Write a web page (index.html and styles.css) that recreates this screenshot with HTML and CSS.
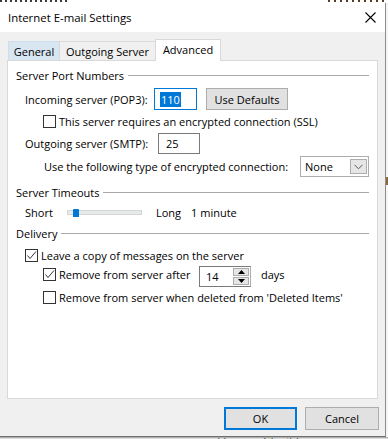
FILE: index.html
```html
<!DOCTYPE html>
<html>
<head>
<meta charset="utf-8">
<link rel="stylesheet" href="styles.css">
</head>
<body>
<div class="topstrip"><span class="bits bits-a"></span><span class="bits bits-b"></span></div>
<div class="stage">
  <div class="dlg">
    <div class="titlebar">
      <span class="title">Internet E-mail Settings</span>
      <svg class="close" width="11" height="11" viewBox="0 0 11 11"><path d="M0.5 0.5 L10.5 10.5 M10.5 0.5 L0.5 10.5" stroke="#000" stroke-width="1.1" fill="none"/></svg>
    </div>
    <div class="dlgbody">
      <div class="tabs">
        <div class="tab tab-general">General</div>
        <div class="tab tab-outgoing">Outgoing Server</div>
        <div class="tab tab-adv">Advanced</div>
      </div>
      <div class="panel">
        <div class="group"><span>Server Port Numbers</span><i class="line"></i></div>

        <div class="row r-in">
          <span class="lbl lbl-in">Incoming server (POP3):</span>
          <div class="field field-focus"><span class="sel">110</span></div>
          <div class="btn btn-def">Use Defaults</div>
        </div>

        <div class="row r-ssl">
          <span class="cb"></span><span class="cbtext">This server requires an encrypted connection (SSL)</span>
        </div>

        <div class="row r-out">
          <span class="lbl lbl-out">Outgoing server (SMTP):</span>
          <div class="field field-out">25</div>
        </div>

        <div class="row r-enc">
          <span>Use the following type of encrypted connection:</span>
          <div class="combo"><span>None</span><span class="drop"><svg width="9" height="6" viewBox="0 0 9 6"><path d="M0.5 0.8 L4.5 4.8 L8.5 0.8" stroke="#5a5a5a" stroke-width="1" fill="none"/></svg></span></div>
        </div>

        <div class="group g2"><span>Server Timeouts</span><i class="line"></i></div>

        <div class="row r-slider">
          <span class="lbl-short">Short</span>
          <div class="track"><span class="thumb"></span></div>
          <span class="long">Long</span>
          <span class="min">1 minute</span>
        </div>

        <div class="group g3"><span>Delivery</span><i class="line"></i></div>

        <div class="row r-leave">
          <span class="cb checked"><svg width="11" height="11" viewBox="0 0 11 11"><path d="M1.5 5.5 L4 8.5 L10 1.5" stroke="#333" stroke-width="1" fill="none"/></svg></span><span class="cbtext">Leave a copy of messages on the server</span>
        </div>

        <div class="row r-after">
          <span class="cb checked"><svg width="11" height="11" viewBox="0 0 11 11"><path d="M1.5 5.5 L4 8.5 L10 1.5" stroke="#333" stroke-width="1" fill="none"/></svg></span><span class="cbtext lbl-after">Remove from server after</span>
          <div class="spin">
            <span class="spinval">14</span>
            <span class="spinbtns">
              <span class="sb"><svg width="7" height="4" viewBox="0 0 7 4"><path d="M3.5 0 L7 4 L0 4 Z" fill="#000"/></svg></span>
              <span class="sb"><svg width="7" height="4" viewBox="0 0 7 4"><path d="M0 0 L7 0 L3.5 4 Z" fill="#000"/></svg></span>
            </span>
          </div>
          <span class="days">days</span>
        </div>

        <div class="row r-del">
          <span class="cb"></span><span class="cbtext">Remove from server when deleted from 'Deleted Items'</span>
        </div>
      </div>
      <div class="buttons">
        <div class="btn btn-ok">OK</div>
        <div class="btn btn-cancel">Cancel</div>
      </div>
    </div>
  </div>
  <div class="rightstrip"></div>
</div>
<div class="behind"><span class="behind-text">Usman Sheikh</span></div>
</body>
</html>
```
FILE: styles.css
```css
* { box-sizing: border-box; }
html, body { margin: 0; padding: 0; }
body {
  width: 388px;
  height: 439px;
  overflow: hidden;
  background: #e4e4e4;
  font-family: "Open Sans", Lato, sans-serif;
  font-size: 11px;
  color: #000;
}
.topstrip {
  height: 3px;
  background: #fff;
  display: flex;
}
.bits { display: block; height: 2px; }
.bits-a { width: 70px; background: repeating-linear-gradient(90deg, #3b3b3b 0 2px, transparent 2px 5px); }
.bits-b { width: 60px; margin-left: auto; background: repeating-linear-gradient(90deg, #5a3b2a 0 2px, transparent 2px 6px); }

.stage { display: flex; }
.dlg {
  width: 386px;
  border-right: 1px solid #8e8e8e;
  border-bottom: 1px solid #6e6e6e;
  background: #f0f0f0;
}
.rightstrip {
  width: 2px;
  background: linear-gradient(180deg, #f5f5f5 0 40%, #8a6a3a 40% 42%, #f5f5f5 42% 100%);
}

.titlebar {
  height: 29px;
  background: #fff;
  display: flex;
  align-items: center;
  padding: 0 9px 0 8px;
}
.title { font-size: 11.4px; flex: 1; }
.close { display: block; }

.dlgbody {
  height: 404px;
  padding-top: 7px;
}
.tabs {
  display: flex;
  align-items: flex-end;
  height: 22px;
  padding-left: 8px;
}
.tab {
  display: flex;
  align-items: center;
  justify-content: center;
  border: 1px solid #d9d9d9;
  border-bottom: none;
  height: 19px;
  background: #f0f0f0;
  margin-bottom: 1px;
}
.tab-general { width: 52px; background: #d8e6f2; border-color: #d0dded; }
.tab-outgoing { width: 97px; margin-left: -1px; }
.tab-adv {
  width: 66px;
  margin-left: -1px;
  height: 22px;
  margin-bottom: 0;
  background: #fff;
  position: relative;
  z-index: 1;
  padding-bottom: 3px;
}

.panel {
  margin-top: -1px;
  margin-left: 7px;
  width: 371px;
  height: 339px;
  background: #fff;
  border: 1px solid #d9d9d9;
  padding: 6px 8px 0 8px;
}
.group {
  display: flex;
  align-items: center;
  height: 16px;
  gap: 4px;
}
.group .line { flex: 1; height: 1px; background: #a8a8a8; }
.g2 { margin-top: 7px; }
.g3 { margin-top: 5px; }

.row { display: flex; align-items: center; padding-left: 9px; }

.r-in { height: 22px; margin-top: 5px; }
.lbl-in { width: 129px; }
.field {
  height: 22px;
  border: 1px solid #7a7a7a;
  background: #fff;
  display: flex;
  align-items: center;
}
.field-focus { width: 43px; border-color: #0078d7; padding-left: 5px; }
.sel { background: #0078d7; color: #fff; height: 15px; line-height: 15px; padding: 0 1px; }
.btn {
  display: flex;
  align-items: center;
  justify-content: center;
  background: #e1e1e1;
  border: 1px solid #adadad;
}
.btn-def { width: 82px; height: 22px; margin-left: 9px; }

.r-ssl { height: 14px; margin-top: 4px; padding-left: 27px; }
.cb {
  width: 13px;
  height: 13px;
  border: 1px solid #333;
  background: #fff;
  flex: none;
  display: flex;
  align-items: center;
  justify-content: center;
}
.cb svg { display: block; }
.cbtext { margin-left: 3px; }

.r-out { height: 21px; margin-top: 5px; }
.lbl-out { width: 133px; }
.field-out { width: 42px; height: 21px; padding-left: 7px; }

.r-enc { height: 21px; margin-top: 2px; padding-left: 28px; justify-content: space-between; }
.combo {
  width: 69px;
  height: 21px;
  border: 1px solid #adadad;
  background: #fff;
  display: flex;
  align-items: center;
  justify-content: space-between;
  padding: 2px 1px 2px 4px;
}
.drop {
  width: 17px;
  height: 15px;
  background: #e6e6e6;
  border: 1px solid #adadad;
  display: flex;
  align-items: center;
  justify-content: center;
}
.drop svg { display: block; }

.r-slider { height: 16px; margin-top: 4px; }
.lbl-short { width: 42px; }
.track {
  width: 75px;
  height: 5px;
  background: #e7eaea;
  border: 1px solid #d6d6d6;
  position: relative;
}
.thumb {
  position: absolute;
  left: 5px;
  top: -2px;
  width: 6px;
  height: 8px;
  background: #0078d7;
  border-radius: 1px 1px 0 0;
}
.long { margin-left: 14px; }
.min { margin-left: 10px; }

.r-leave { height: 14px; margin-top: 7px; }

.r-after { height: 16px; margin-top: 4px; padding-left: 27px; }
.lbl-after { width: 140px; margin-left: 3px; }
.spin {
  width: 52px;
  height: 21px;
  margin-top: 4px;
  border: 1px solid #7a7a7a;
  border-right-color: #adadad;
  background: #fff;
  display: flex;
  align-items: center;
  padding-left: 6px;
}
.spinval { flex: 1; }
.spinbtns {
  width: 17px;
  height: 19px;
  display: flex;
  flex-direction: column;
  gap: 1px;
  padding: 1px 1px 1px 0;
}
.sb {
  flex: 1;
  background: #e6e6e6;
  border: 1px solid #adadad;
  display: flex;
  align-items: center;
  justify-content: center;
}
.sb svg { display: block; }
.days { margin-left: 10px; }

.r-del { height: 14px; margin-top: 8px; padding-left: 27px; }

.buttons {
  display: flex;
  justify-content: flex-end;
  gap: 8px;
  margin-top: 8px;
  padding-right: 6px;
}
.btn-ok { width: 73px; height: 23px; border: 2px solid #0078d7; }
.btn-cancel { width: 74px; height: 23px; }

.behind {
  height: 3px;
  background: #dcdcdc;
  border-top: 1px solid #b0b0b0;
  padding-left: 217px;
  overflow: hidden;
  position: relative;
}
.behind-text {
  display: block;
  font-size: 13px;
  line-height: 13px;
  color: #555;
  margin-top: -3px;
}
```
